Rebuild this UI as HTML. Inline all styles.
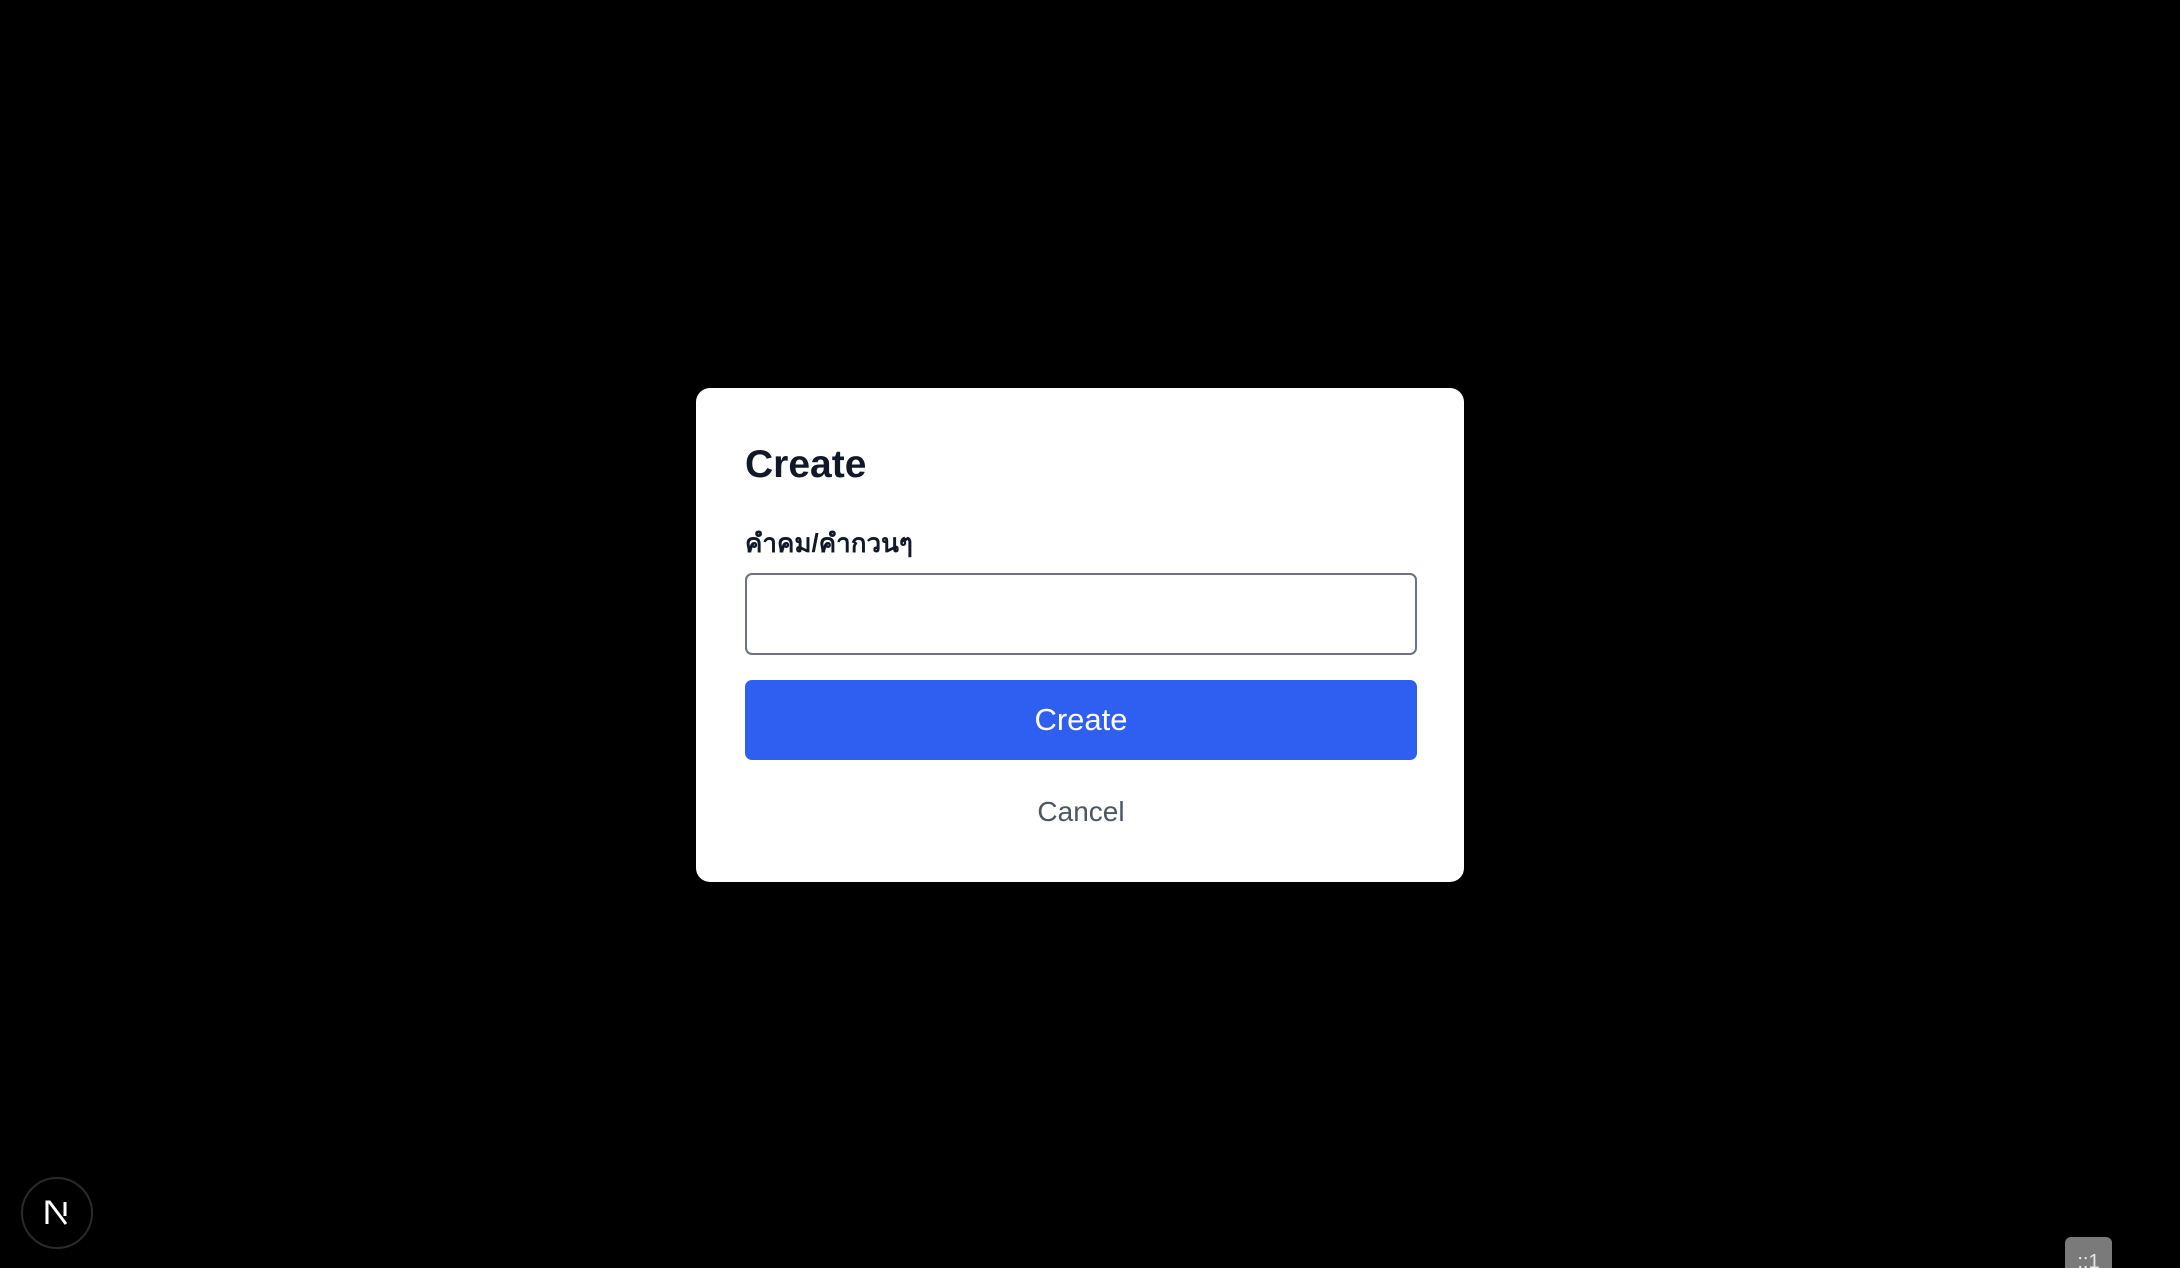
<!DOCTYPE html>
<html><head><meta charset="utf-8"><style>
html,body{margin:0;padding:0;background:#000;width:2180px;height:1268px;overflow:hidden;position:relative;font-family:"Liberation Sans","Noto Sans CJK TC",sans-serif;}
.modal{position:absolute;left:696px;top:388px;width:768px;height:494px;background:#fff;border-radius:14px;}
h1{position:absolute;left:49px;top:57px;margin:0;font-size:39px;font-weight:bold;color:#111827;line-height:1;}
.label{position:absolute;left:49px;top:140px;font-size:26px;font-weight:bold;color:#111827;line-height:1.2;}
.input{position:absolute;left:49px;top:185px;width:668px;height:78px;border:2px solid #6b7280;border-radius:7px;box-sizing:content-box;}
.btn{position:absolute;left:49px;top:292px;width:672px;height:80px;background:#2f5ff0;border-radius:7px;color:#fff;font-size:31px;text-align:center;line-height:80px;}
.cancel{position:absolute;left:49px;top:407px;width:672px;text-align:center;font-size:28px;color:#4b5563;line-height:1.2;}
.n{position:absolute;left:21px;top:1177px;width:72px;height:72px;border-radius:50%;border:2px solid #2a2a2a;background:#000;box-sizing:border-box;}
.badge{position:absolute;left:2065px;top:1237px;width:47px;height:40px;background:#7a7a7a;border-radius:6px;color:#e8e8e8;font-size:20px;text-align:center;line-height:50px;}
</style></head><body>
<div class="modal">
<h1>Create</h1>
<div class="label">คำคม/คำกวนๆ</div>
<div class="input"></div>
<div class="btn">Create</div>
<div class="cancel">Cancel</div>
</div>
<div class="n"><svg width="68" height="68" viewBox="0 0 68 68"><path d="M24 45V23h2.5L43 45" stroke="#fff" stroke-width="3" fill="none"/><path d="M42 23v14" stroke="#fff" stroke-width="3"/></svg></div>
<div class="badge">::1</div>
</body></html>
